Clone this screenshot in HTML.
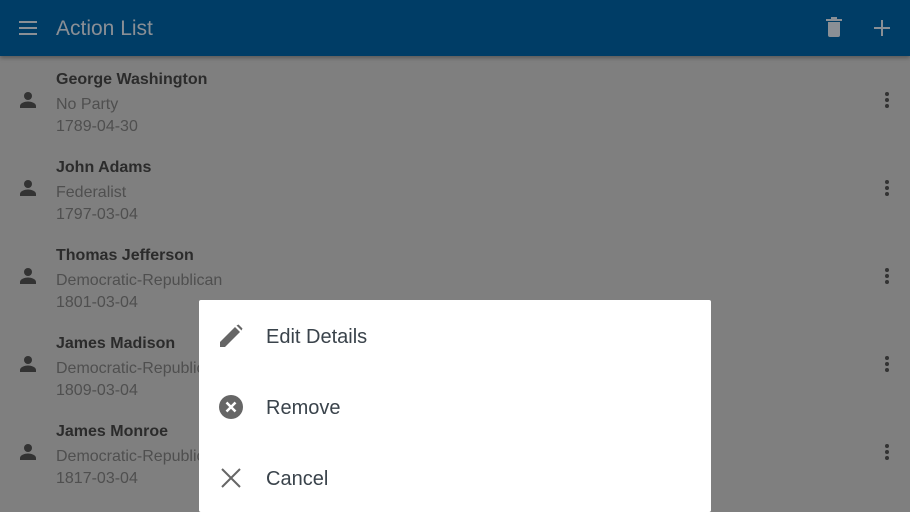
<!DOCTYPE html>
<html><head><style>
*{margin:0;padding:0;box-sizing:border-box}
body{width:910px;height:512px;overflow:hidden;background:#7f7f7f;font-family:"Liberation Sans",sans-serif;position:relative}
.bar{position:absolute;left:0;top:0;width:910px;height:56px;background:#003d66;box-shadow:0 2px 4px rgba(0,0,0,.3)}
.title{position:absolute;left:56px;top:17px;font-size:21px;color:#8a8f95}
.row{position:absolute;left:0;width:910px;height:88px}
.n{position:absolute;left:56px;top:15px;font-size:16px;color:#2b2b2b;font-weight:bold}
.p{position:absolute;left:56px;top:40px;font-size:16px;color:#4f4f4f}
.d{position:absolute;left:56px;top:62px;font-size:16px;color:#4f4f4f}
.pi{position:absolute;left:19px;top:35px}
.dots{position:absolute;left:884px;top:36px}
.dlg{position:absolute;left:199px;top:300px;width:512px;height:212px;background:#fff;border-radius:2px}
.it{position:absolute;left:67px;font-size:20px;color:#3a434b}
.ic{position:absolute;left:20px}
</style></head><body>
<div class="bar">
<svg style="position:absolute;left:18px;top:19px" width="20" height="18"><rect x="1" y="2" width="18" height="2" fill="#8a8f95"/><rect x="1" y="8" width="18" height="2" fill="#8a8f95"/><rect x="1" y="14" width="18" height="2" fill="#8a8f95"/></svg>
<div class="title">Action List</div>
<svg style="position:absolute;left:826px;top:17px" width="16" height="20"><rect x="0" y="2" width="16" height="2" fill="#8a8f95"/><rect x="5" y="0" width="6" height="3" fill="#8a8f95"/><path d="M2 5h12v13a2 2 0 0 1-2 2H4a2 2 0 0 1-2-2z" fill="#8a8f95"/></svg>
<svg style="position:absolute;left:874px;top:20px" width="16" height="16"><rect x="7" y="0" width="2" height="16" fill="#8a8f95"/><rect x="0" y="7" width="16" height="2" fill="#8a8f95"/></svg>
</div>
<div class="row" style="top:56px"><svg class="pi" width="18" height="18"><circle cx="9" cy="5" r="4" fill="#333"/><path d="M1 17v-2c0-3 5-4.5 8-4.5s8 1.5 8 4.5v2z" fill="#333"/></svg><div class="n">George Washington</div><div class="p">No Party</div><div class="d">1789-04-30</div><svg class="dots" width="6" height="16"><circle cx="3" cy="2" r="2" fill="#333"/><circle cx="3" cy="8" r="2" fill="#333"/><circle cx="3" cy="14" r="2" fill="#333"/></svg></div>
<div class="row" style="top:144px"><svg class="pi" width="18" height="18"><circle cx="9" cy="5" r="4" fill="#333"/><path d="M1 17v-2c0-3 5-4.5 8-4.5s8 1.5 8 4.5v2z" fill="#333"/></svg><div class="n">John Adams</div><div class="p">Federalist</div><div class="d">1797-03-04</div><svg class="dots" width="6" height="16"><circle cx="3" cy="2" r="2" fill="#333"/><circle cx="3" cy="8" r="2" fill="#333"/><circle cx="3" cy="14" r="2" fill="#333"/></svg></div>
<div class="row" style="top:232px"><svg class="pi" width="18" height="18"><circle cx="9" cy="5" r="4" fill="#333"/><path d="M1 17v-2c0-3 5-4.5 8-4.5s8 1.5 8 4.5v2z" fill="#333"/></svg><div class="n">Thomas Jefferson</div><div class="p">Democratic-Republican</div><div class="d">1801-03-04</div><svg class="dots" width="6" height="16"><circle cx="3" cy="2" r="2" fill="#333"/><circle cx="3" cy="8" r="2" fill="#333"/><circle cx="3" cy="14" r="2" fill="#333"/></svg></div>
<div class="row" style="top:320px"><svg class="pi" width="18" height="18"><circle cx="9" cy="5" r="4" fill="#333"/><path d="M1 17v-2c0-3 5-4.5 8-4.5s8 1.5 8 4.5v2z" fill="#333"/></svg><div class="n">James Madison</div><div class="p">Democratic-Republican</div><div class="d">1809-03-04</div><svg class="dots" width="6" height="16"><circle cx="3" cy="2" r="2" fill="#333"/><circle cx="3" cy="8" r="2" fill="#333"/><circle cx="3" cy="14" r="2" fill="#333"/></svg></div>
<div class="row" style="top:408px"><svg class="pi" width="18" height="18"><circle cx="9" cy="5" r="4" fill="#333"/><path d="M1 17v-2c0-3 5-4.5 8-4.5s8 1.5 8 4.5v2z" fill="#333"/></svg><div class="n">James Monroe</div><div class="p">Democratic-Republican</div><div class="d">1817-03-04</div><svg class="dots" width="6" height="16"><circle cx="3" cy="2" r="2" fill="#333"/><circle cx="3" cy="8" r="2" fill="#333"/><circle cx="3" cy="14" r="2" fill="#333"/></svg></div>
<div class="dlg">
<svg class="ic" style="top:24px" width="24" height="24"><path d="M1 23v-5L16 3l5 5L6 23z" fill="#666"/><path d="M17.5 1.5l2-1 4 4-1 2z" fill="#666"/></svg>
<div class="it" style="top:26px">Edit Details</div>
<svg class="ic" style="top:95px" width="24" height="24"><circle cx="12" cy="12" r="12" fill="#666"/><path d="M7.5 7.5l9 9M16.5 7.5l-9 9" stroke="#fff" stroke-width="2.5"/></svg>
<div class="it" style="top:97px">Remove</div>
<svg class="ic" style="top:166px" width="24" height="24"><path d="M3 3l18 18M21 3L3 21" stroke="#666" stroke-width="2"/></svg>
<div class="it" style="top:168px">Cancel</div>
</div>
</body></html>
